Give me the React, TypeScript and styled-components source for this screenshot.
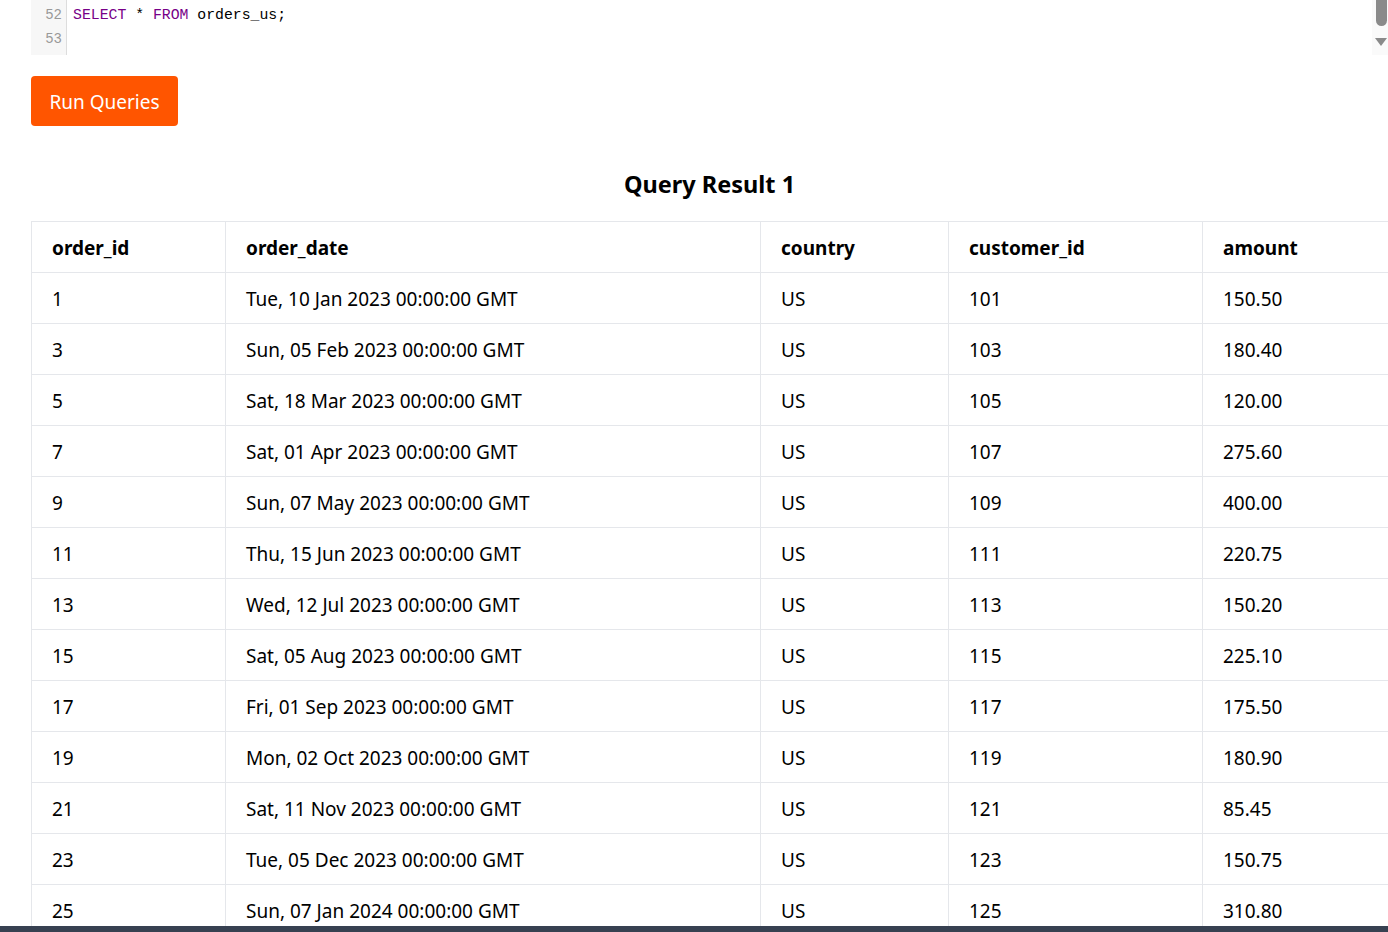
import React from "react";
import styled, { createGlobalStyle } from "styled-components";

const Global = createGlobalStyle`
  html, body { margin: 0; padding: 0; background: #fff; overflow: hidden; }
  body { font-family: "Noto Sans", "Open Sans", sans-serif; color: #000; }
`;

const Page = styled.div`
  width: 1388px;
  height: 932px;
  overflow: hidden;
  position: relative;
`;

const Editor = styled.div`
  margin-left: 31px;
  display: flex;
  height: 55px;
  position: relative;
`;

const Gutter = styled.div`
  width: 35px;
  background: #f7f7f7;
  border-right: 1px solid #ddd;
  padding-top: 3px;
`;

const LineNo = styled.div`
  height: 24px;
  line-height: 24px;
  text-align: right;
  padding-right: 4px;
  font-family: "Liberation Mono", monospace;
  font-size: 14px;
  color: #999;
`;

const Code = styled.div`
  flex: 1;
  padding-top: 3px;
  padding-left: 6px;
`;

const CodeLine = styled.div`
  height: 24px;
  line-height: 24px;
  font-family: "Liberation Mono", monospace;
  font-size: 14.8px;
  color: #000;
  white-space: pre;
`;

const Kw = styled.span`
  color: #708;
`;

const ScrollTrack = styled.div`
  position: absolute;
  right: 0;
  top: 0;
  width: 16px;
  height: 55px;
  background: #fafafa;
`;

const Thumb = styled.div`
  position: absolute;
  left: 4px;
  top: 0;
  width: 11px;
  height: 26px;
  background: #8a8a8a;
  border-radius: 0 0 6px 6px;
`;

const Arrow = styled.div`
  position: absolute;
  left: 3px;
  top: 38px;
  width: 0;
  height: 0;
  border-left: 6px solid transparent;
  border-right: 6px solid transparent;
  border-top: 8px solid #8a8a8a;
`;

const RunButton = styled.button`
  margin: 21px 0 0 31px;
  width: 147px;
  height: 50px;
  background: #ff5500;
  color: #fff;
  border: none;
  border-radius: 4px;
  font-family: "Noto Sans", sans-serif;
  font-size: 19px;
  padding: 2px 0 0 0;
  display: block;
`;

const Section = styled.div`
  margin: 0 0 0 31px;
  width: 1357px;
`;

const Title = styled.h2`
  margin: 40px 0 0 0;
  height: 55px;
  line-height: 36px;
  text-align: center;
  font-size: 23.5px;
  font-weight: 700;
`;

const Table = styled.table`
  border-collapse: collapse;
  table-layout: fixed;
  width: 1360px;
  border-top: 1px solid #e5e7eb;
  border-left: 1px solid #e5e7eb;
`;

const Th = styled.th`
  height: 48px;
  padding: 2px 0 0 20px;
  text-align: left;
  font-size: 19px;
  font-weight: 700;
  border-right: 1px solid #e5e7eb;
  border-bottom: 1px solid #e5e7eb;
`;

const Td = styled.td`
  height: 48px;
  padding: 2px 0 0 20px;
  font-size: 19px;
  border-right: 1px solid #e5e7eb;
  border-bottom: 1px solid #e5e7eb;
  white-space: nowrap;
`;

const BottomBar = styled.div`
  position: absolute;
  left: 0;
  right: 0;
  bottom: 0;
  height: 6px;
  background: #374151;
`;

const cols = [
  { name: "order_id", w: 194 },
  { name: "order_date", w: 535 },
  { name: "country", w: 188 },
  { name: "customer_id", w: 254 },
  { name: "amount", w: 189 },
];

const rows: [string, string, string, string, string][] = [
  ["1", "Tue, 10 Jan 2023 00:00:00 GMT", "US", "101", "150.50"],
  ["3", "Sun, 05 Feb 2023 00:00:00 GMT", "US", "103", "180.40"],
  ["5", "Sat, 18 Mar 2023 00:00:00 GMT", "US", "105", "120.00"],
  ["7", "Sat, 01 Apr 2023 00:00:00 GMT", "US", "107", "275.60"],
  ["9", "Sun, 07 May 2023 00:00:00 GMT", "US", "109", "400.00"],
  ["11", "Thu, 15 Jun 2023 00:00:00 GMT", "US", "111", "220.75"],
  ["13", "Wed, 12 Jul 2023 00:00:00 GMT", "US", "113", "150.20"],
  ["15", "Sat, 05 Aug 2023 00:00:00 GMT", "US", "115", "225.10"],
  ["17", "Fri, 01 Sep 2023 00:00:00 GMT", "US", "117", "175.50"],
  ["19", "Mon, 02 Oct 2023 00:00:00 GMT", "US", "119", "180.90"],
  ["21", "Sat, 11 Nov 2023 00:00:00 GMT", "US", "121", "85.45"],
  ["23", "Tue, 05 Dec 2023 00:00:00 GMT", "US", "123", "150.75"],
  ["25", "Sun, 07 Jan 2024 00:00:00 GMT", "US", "125", "310.80"],
];

export default function App() {
  return (
    <Page>
      <Global />
      <Editor>
        <Gutter>
          <LineNo>52</LineNo>
          <LineNo>53</LineNo>
        </Gutter>
        <Code>
          <CodeLine>
            <Kw>SELECT</Kw> * <Kw>FROM</Kw> orders_us;
          </CodeLine>
          <CodeLine> </CodeLine>
        </Code>
        <ScrollTrack>
          <Thumb />
          <Arrow />
        </ScrollTrack>
      </Editor>
      <RunButton>Run Queries</RunButton>
      <Section>
        <Title>Query Result 1</Title>
        <Table>
          <colgroup>
            {cols.map((c) => (
              <col key={c.name} style={{ width: c.w }} />
            ))}
          </colgroup>
          <thead>
            <tr>
              {cols.map((c) => (
                <Th key={c.name}>{c.name}</Th>
              ))}
            </tr>
          </thead>
          <tbody>
            {rows.map((r) => (
              <tr key={r[0]}>
                {r.map((v, i) => (
                  <Td key={i}>{v}</Td>
                ))}
              </tr>
            ))}
          </tbody>
        </Table>
      </Section>
      <BottomBar />
    </Page>
  );
}
